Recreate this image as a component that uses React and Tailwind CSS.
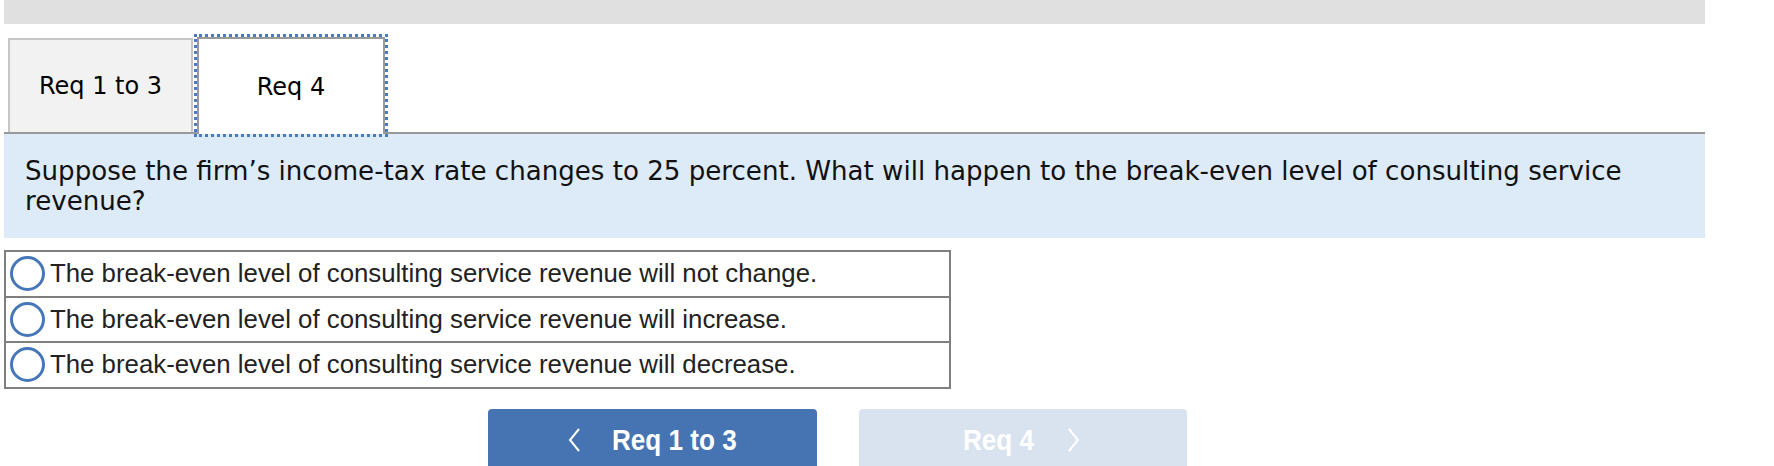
import React from 'react';

const options = [
  'The break-even level of consulting service revenue will not change.',
  'The break-even level of consulting service revenue will increase.',
  'The break-even level of consulting service revenue will decrease.',
];

function Chevron({ dir }) {
  return (
    <svg width="14" height="26" viewBox="0 0 14 26" fill="none" stroke="white" strokeWidth="2">
      {dir === 'left' ? <polyline points="12,2 3,13 12,24" /> : <polyline points="2,2 11,13 2,24" />}
    </svg>
  );
}

export default function App() {
  return (
    <div className="w-[1774px] h-[466px] overflow-hidden bg-white pl-[4px]">
      {/* barra grigia */}
      <div className="h-[24px] w-[1701px] bg-[#e0e0e0]" />

      {/* tabs */}
      <div className="flex items-end h-[108px] pl-[4px]" style={{ fontFamily: '"DejaVu Sans", sans-serif' }}>
        <div className="w-[185px] h-[94px] bg-[#f2f2f2] border-2 border-b-0 border-[#c6c6c6] flex items-center justify-center text-[24px] text-black">
          Req 1 to 3
        </div>
        <div className="relative z-10 ml-[4px] -mb-[2px] w-[188px] h-[97px] bg-white border-2 border-b-0 border-[#999] outline-3 outline-dotted outline-[#4a7bbf] flex items-center justify-center text-[24px] text-black">
          Req 4
        </div>
      </div>

      {/* domanda */}
      <div
        className="w-[1701px] border-t-2 border-[#999] bg-[#ddeaf7] px-[21px] py-[22px] text-[26.1px] leading-[30px] text-[#111]"
        style={{ fontFamily: '"DejaVu Sans", sans-serif' }}
      >
        Suppose the firm’s income-tax rate changes to 25 percent. What will happen to the break-even level of consulting service revenue?
      </div>

      {/* opzioni */}
      <div className="mt-[12px] w-[947px] border-2 border-b-0 border-[#7f7f7f]" style={{ fontFamily: '"Liberation Sans", Arial, sans-serif' }}>
        {options.map((opt) => (
          <div key={opt} className="h-[45.5px] border-b-2 border-[#7f7f7f] flex items-center">
            <span className="ml-[4px] w-[35px] h-[35px] rounded-full border-[3.5px] border-[#4677b8] bg-white shrink-0" />
            <span className="ml-[5px] text-[25.8px] text-[#222]">{opt}</span>
          </div>
        ))}
      </div>

      {/* navigazione */}
      <div className="mt-[20px] ml-[484px] flex gap-[42px]" style={{ fontFamily: '"Liberation Sans", Arial, sans-serif' }}>
        <button className="w-[329px] h-[66px] rounded-t-[4px] bg-[#4674b2] text-white font-bold flex items-start justify-center pt-[17px] pl-[6px]">
          <span className="flex items-center gap-[24px]">
            <Chevron dir="left" />
            <span className="text-[29px] leading-[29px] inline-block scale-x-[0.9]">Req 1 to 3</span>
          </span>
        </button>
        <button className="w-[328px] h-[66px] rounded-t-[4px] bg-[#d9e3ef] text-white font-bold flex items-start justify-center pt-[17px] pr-[6px]">
          <span className="flex items-center gap-[30px]">
            <span className="text-[29px] leading-[29px] inline-block scale-x-[0.9]">Req 4</span>
            <Chevron dir="right" />
          </span>
        </button>
      </div>
    </div>
  );
}
